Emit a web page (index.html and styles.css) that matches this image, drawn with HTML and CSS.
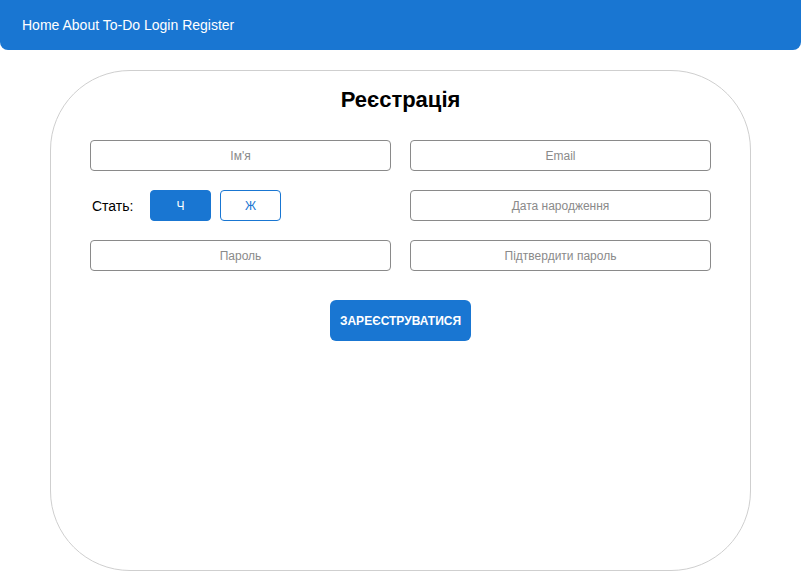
FILE: index.html
```html
<!DOCTYPE html>
<html lang="uk">
<head>
<meta charset="utf-8">
<link rel="stylesheet" href="styles.css">
</head>
<body>
<nav class="navbar">
  <a class="nav-link">Home</a> <a class="nav-link">About</a> <a class="nav-link">To-Do</a> <a class="nav-link">Login</a> <a class="nav-link">Register</a>
</nav>
<main class="card">
  <h2 class="title">Реєстрація</h2>
  <form class="form">
    <input class="field" type="text" placeholder="Ім'я">
    <input class="field" type="text" placeholder="Email">
    <div class="gender">
      <span class="gender-label">Стать:</span>
      <button type="button" class="gbtn gbtn-active">Ч</button>
      <button type="button" class="gbtn">Ж</button>
    </div>
    <input class="field" type="text" placeholder="Дата народження">
    <input class="field" type="password" placeholder="Пароль">
    <input class="field" type="password" placeholder="Підтвердити пароль">
    <div class="submit-row">
      <button type="button" class="submit">ЗАРЕЄСТРУВАТИСЯ</button>
    </div>
  </form>
</main>
</body>
</html>
```
FILE: styles.css
```css
* { box-sizing: border-box; }
html, body { margin: 0; padding: 0; background: #fff; }
body { font-family: "Liberation Sans", Arial, sans-serif; color: #000; }

.navbar {
  height: 50px;
  line-height: 50px;
  background: #1976d2;
  border-radius: 0 0 8px 8px;
  padding: 0 22px;
  color: #fff;
  font-size: 14px;
}
.nav-link { color: #fff; text-decoration: none; }

.card {
  width: 701px;
  height: 501px;
  margin: 20px auto 0;
  border: 1px solid #cfcfcf;
  border-radius: 80px;
  padding: 17px 39px 0;
}
.title {
  margin: 0 0 28px;
  text-align: center;
  font-size: 22px;
  line-height: 24px;
  font-weight: bold;
}
.form {
  display: grid;
  grid-template-columns: 301px 301px;
  column-gap: 19px;
  row-gap: 19px;
}
.field {
  height: 31px;
  border: 1px solid #8a8a8a;
  border-radius: 4px;
  text-align: center;
  font-family: "Liberation Sans", Arial, sans-serif;
  font-size: 12px;
  padding: 0 8px;
  background: #fff;
}
.field::placeholder { color: #8a8a8a; }

.gender { display: flex; align-items: center; height: 31px; }
.gender-label { font-size: 14px; padding-left: 2px; width: 60px; }
.gbtn {
  width: 61px;
  height: 31px;
  margin-right: 9px;
  border: 1px solid #1976d2;
  border-radius: 4px;
  background: #fff;
  color: #1976d2;
  font-family: "Liberation Sans", Arial, sans-serif;
  font-size: 12px;
  padding: 0;
}
.gbtn-active { background: #1976d2; color: #fff; }

.submit-row {
  grid-column: 1 / -1;
  display: flex;
  justify-content: center;
  margin-top: 10px;
}
.submit {
  width: 141px;
  height: 41px;
  border: none;
  border-radius: 6px;
  background: #1976d2;
  color: #fff;
  font-family: "Liberation Sans", Arial, sans-serif;
  font-size: 12px;
  font-weight: bold;
  padding: 0;
}
```
